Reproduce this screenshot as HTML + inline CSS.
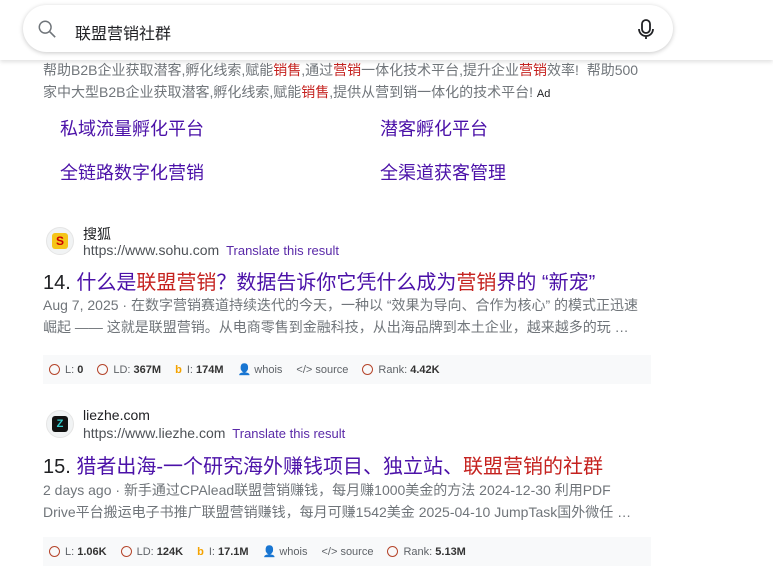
<!DOCTYPE html>
<html><head><meta charset="utf-8"><style>
*{margin:0;padding:0;box-sizing:border-box}
body{width:773px;height:572px;overflow:hidden;background:#fff;font-family:"Liberation Sans","Noto Sans CJK SC",sans-serif;position:relative}
.a{position:absolute;white-space:nowrap}
.hdr{position:absolute;left:0;top:0;width:773px;height:60px;background:#fff;box-shadow:0 2px 4px rgba(0,0,0,.12);z-index:2}
.box{position:absolute;left:23px;top:5px;width:650px;height:47px;border-radius:24px;background:#fff;box-shadow:0 1px 5px rgba(0,0,0,.22)}
.g{color:#70757a;font-size:14px}
.r{color:#c5221f}
.lk{color:#4b11a8;font-size:18px}
.tt{color:#4b11a8;font-size:20px}
.sn{color:#70757a;font-size:14px}
.bar{position:absolute;left:43px;width:608px;height:29px;background:#f8f9fa;font-size:11px;color:#5f6368;display:flex;align-items:center;padding-left:6px}
.bar b{color:#333}
.bar span{margin-right:14px;display:flex;align-items:center}
.o{display:inline-block;width:11px;height:11px;border:1.5px solid #b5452b;border-radius:50%;margin-right:5px}
.fav{position:absolute;width:28px;height:28px;border-radius:50%;background:#f1f3f4;border:1px solid #e5e5e5;display:flex;align-items:center;justify-content:center}
</style></head><body>
<div class="hdr"><div class="box">
<svg class="a" style="left:14px;top:14px" width="20" height="20" viewBox="0 0 22 22"><circle cx="9" cy="9" r="6.5" fill="none" stroke="#70757a" stroke-width="1.6"/><path d="M14 14l6 6" stroke="#70757a" stroke-width="1.8"/></svg>
<div class="a" style="left:52px;top:15px;font-size:16px;color:#202124">联盟营销社群</div>
<svg class="a" style="left:612px;top:13px" width="22" height="22" viewBox="0 0 22 22"><rect x="7" y="2" width="8" height="13" rx="4" fill="none" stroke="#202124" stroke-width="1.8"/><path d="M4 11a7 7 0 0 0 14 0M11 18v3" fill="none" stroke="#202124" stroke-width="1.8"/></svg>
</div></div>
<div class="a g" style="left:43px;top:60px">帮助B2B企业获取潜客,孵化线索,赋能<span class="r">销售</span>,通过<span class="r">营销</span>一体化技术平台,提升企业<span class="r">营销</span>效率!&nbsp; 帮助500</div>
<div class="a g" style="left:43px;top:82px">家中大型B2B企业获取潜客,孵化线索,赋能<span class="r">销售</span>,提供从营到销一体化的技术平台! <span style="font-size:11px;color:#202124">Ad</span></div>
<div class="a lk" style="left:60px;top:115px">私域流量孵化平台</div>
<div class="a lk" style="left:380px;top:115px">潜客孵化平台</div>
<div class="a lk" style="left:60px;top:159px">全链路数字化营销</div>
<div class="a lk" style="left:380px;top:159px">全渠道获客管理</div>

<div class="fav" style="left:46px;top:227px"><div style="width:16px;height:16px;background:#f5c518;border-radius:3px;color:#c00;font-weight:bold;font-size:12px;text-align:center;line-height:16px">S</div></div>
<div class="a" style="left:83px;top:224px;font-size:14px;color:#202124">搜狐</div>
<div class="a" style="left:83px;top:242px;font-size:14px;color:#4d5156">https://www.sohu.com <span style="color:#5a2aa8;font-size:13px;margin-left:3px">Translate this result</span></div>
<div class="a tt" style="left:43px;top:266px"><span style="color:#202124">14.</span> 什么是<span class="r">联盟营销</span>？数据告诉你它凭什么成为<span class="r">营销</span>界的 “新宠”</div>
<div class="a sn" style="left:43px;top:295px">Aug 7, 2025 · 在数字营销赛道持续迭代的今天，一种以 “效果为导向、合作为核心” 的模式正迅速</div>
<div class="a sn" style="left:43px;top:317px">崛起 —— 这就是联盟营销。从电商零售到金融科技，从出海品牌到本土企业，越来越多的玩 …</div>
<div class="bar" style="top:355px"><span><i class="o"></i>L: <b>&nbsp;0</b></span><span><i class="o"></i>LD: <b>&nbsp;367M</b></span><span><b style="color:#f4a300;margin-right:5px">b</b>I: <b>&nbsp;174M</b></span><span>👤&nbsp;whois</span><span>&lt;/&gt;&nbsp;source</span><span><i class="o"></i>Rank: <b>&nbsp;4.42K</b></span></div>

<div class="fav" style="left:46px;top:410px"><div style="width:16px;height:16px;background:#111;border-radius:3px;color:#3cc;font-weight:bold;font-size:11px;text-align:center;line-height:16px">Z</div></div>
<div class="a" style="left:83px;top:407px;font-size:14px;color:#202124">liezhe.com</div>
<div class="a" style="left:83px;top:425px;font-size:14px;color:#4d5156">https://www.liezhe.com <span style="color:#5a2aa8;font-size:13px;margin-left:3px">Translate this result</span></div>
<div class="a tt" style="left:43px;top:450px"><span style="color:#202124">15.</span> 猎者出海-一个研究海外赚钱项目、独立站、<span class="r">联盟营销的社群</span></div>
<div class="a sn" style="left:43px;top:480px">2 days ago · 新手通过CPAlead联盟营销赚钱，每月赚1000美金的方法 2024-12-30 利用PDF</div>
<div class="a sn" style="left:43px;top:502px">Drive平台搬运电子书推广联盟营销赚钱，每月可赚1542美金 2025-04-10 JumpTask国外微任 …</div>
<div class="bar" style="top:537px"><span><i class="o"></i>L: <b>&nbsp;1.06K</b></span><span><i class="o"></i>LD: <b>&nbsp;124K</b></span><span><b style="color:#f4a300;margin-right:5px">b</b>I: <b>&nbsp;17.1M</b></span><span>👤&nbsp;whois</span><span>&lt;/&gt;&nbsp;source</span><span><i class="o"></i>Rank: <b>&nbsp;5.13M</b></span></div>
</body></html>
